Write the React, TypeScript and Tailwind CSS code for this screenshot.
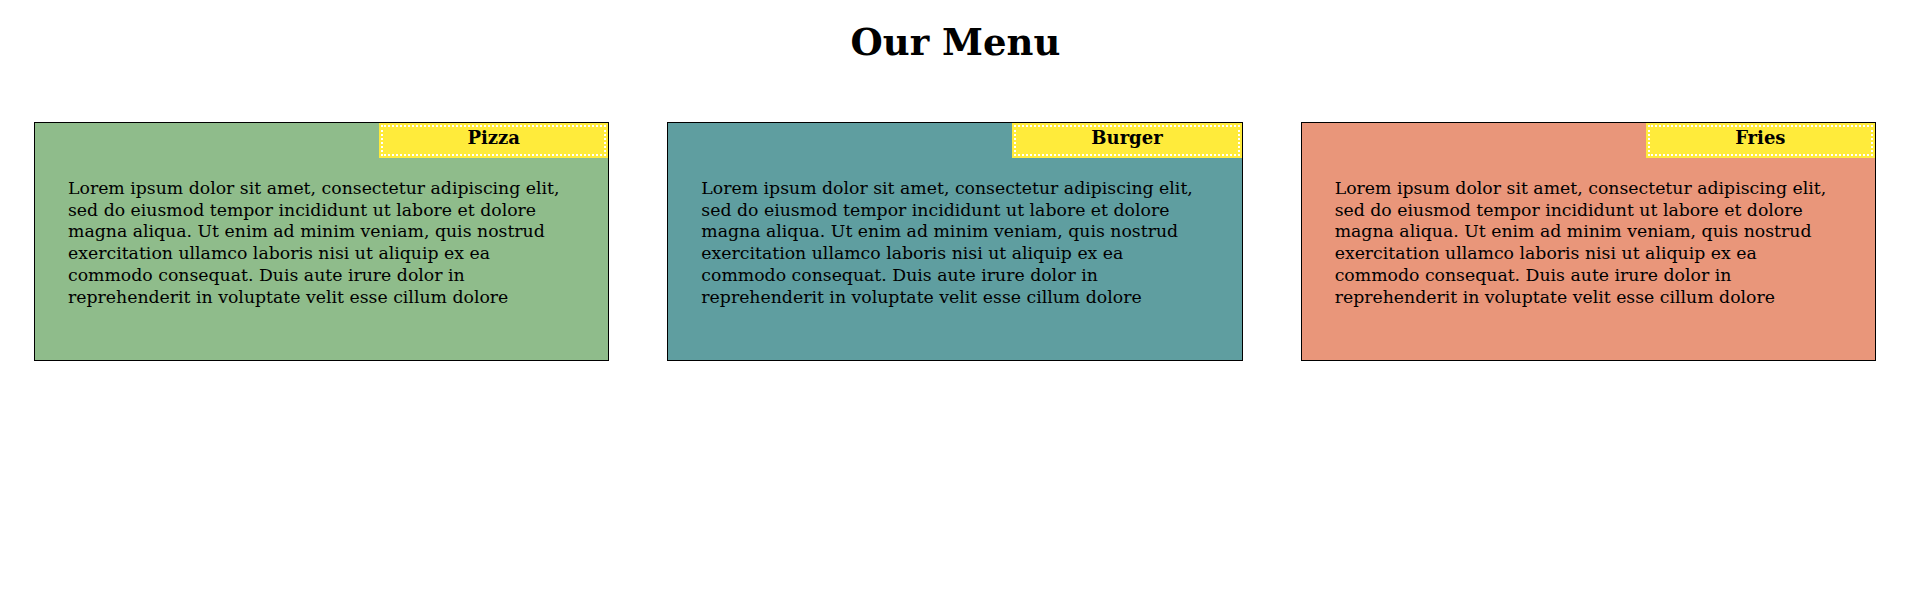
const MENU = [
  { name: "Pizza", bg: "bg-[#8fbc8b]" },
  { name: "Burger", bg: "bg-[#5f9ea0]" },
  { name: "Fries", bg: "bg-[#e9967a]" },
];

const LINES = [
  "Lorem ipsum dolor sit amet, consectetur adipiscing elit,",
  "sed do eiusmod tempor incididunt ut labore et dolore",
  "magna aliqua. Ut enim ad minim veniam, quis nostrud",
  "exercitation ullamco laboris nisi ut aliquip ex ea",
  "commodo consequat. Duis aute irure dolor in",
  "reprehenderit in voluptate velit esse cillum dolore",
];

function MenuCard({ name, bg }: { name: string; bg: string }) {
  return (
    <div className={`flex h-[239px] flex-1 flex-col border border-black ${bg}`}>
      {/* label pinned to the top right */}
      <div className="h-[35px] w-[40%] self-end bg-[#ffeb3b] p-[2px]">
        <div className="h-full border-2 border-dotted border-white text-center text-[18px] font-bold leading-[21px]">
          {name}
        </div>
      </div>
      <p className="mt-[20px] px-[33px] text-[17.3px] leading-[21.7px] text-black">
        {LINES.map((line, i) => (
          <span key={i} className="block whitespace-nowrap">
            {line}
          </span>
        ))}
      </p>
    </div>
  );
}

export default function App() {
  return (
    <div className="min-h-[594px] bg-white font-['DejaVu_Serif',serif] text-black">
      <h1 className="pt-[20px] text-center text-[37px] font-bold leading-[44px]">
        Our Menu
      </h1>
      <div className="mt-[58px] flex gap-[58px] pl-[34px] pr-[35px]">
        {MENU.map((item) => (
          <MenuCard key={item.name} name={item.name} bg={item.bg} />
        ))}
      </div>
    </div>
  );
}
